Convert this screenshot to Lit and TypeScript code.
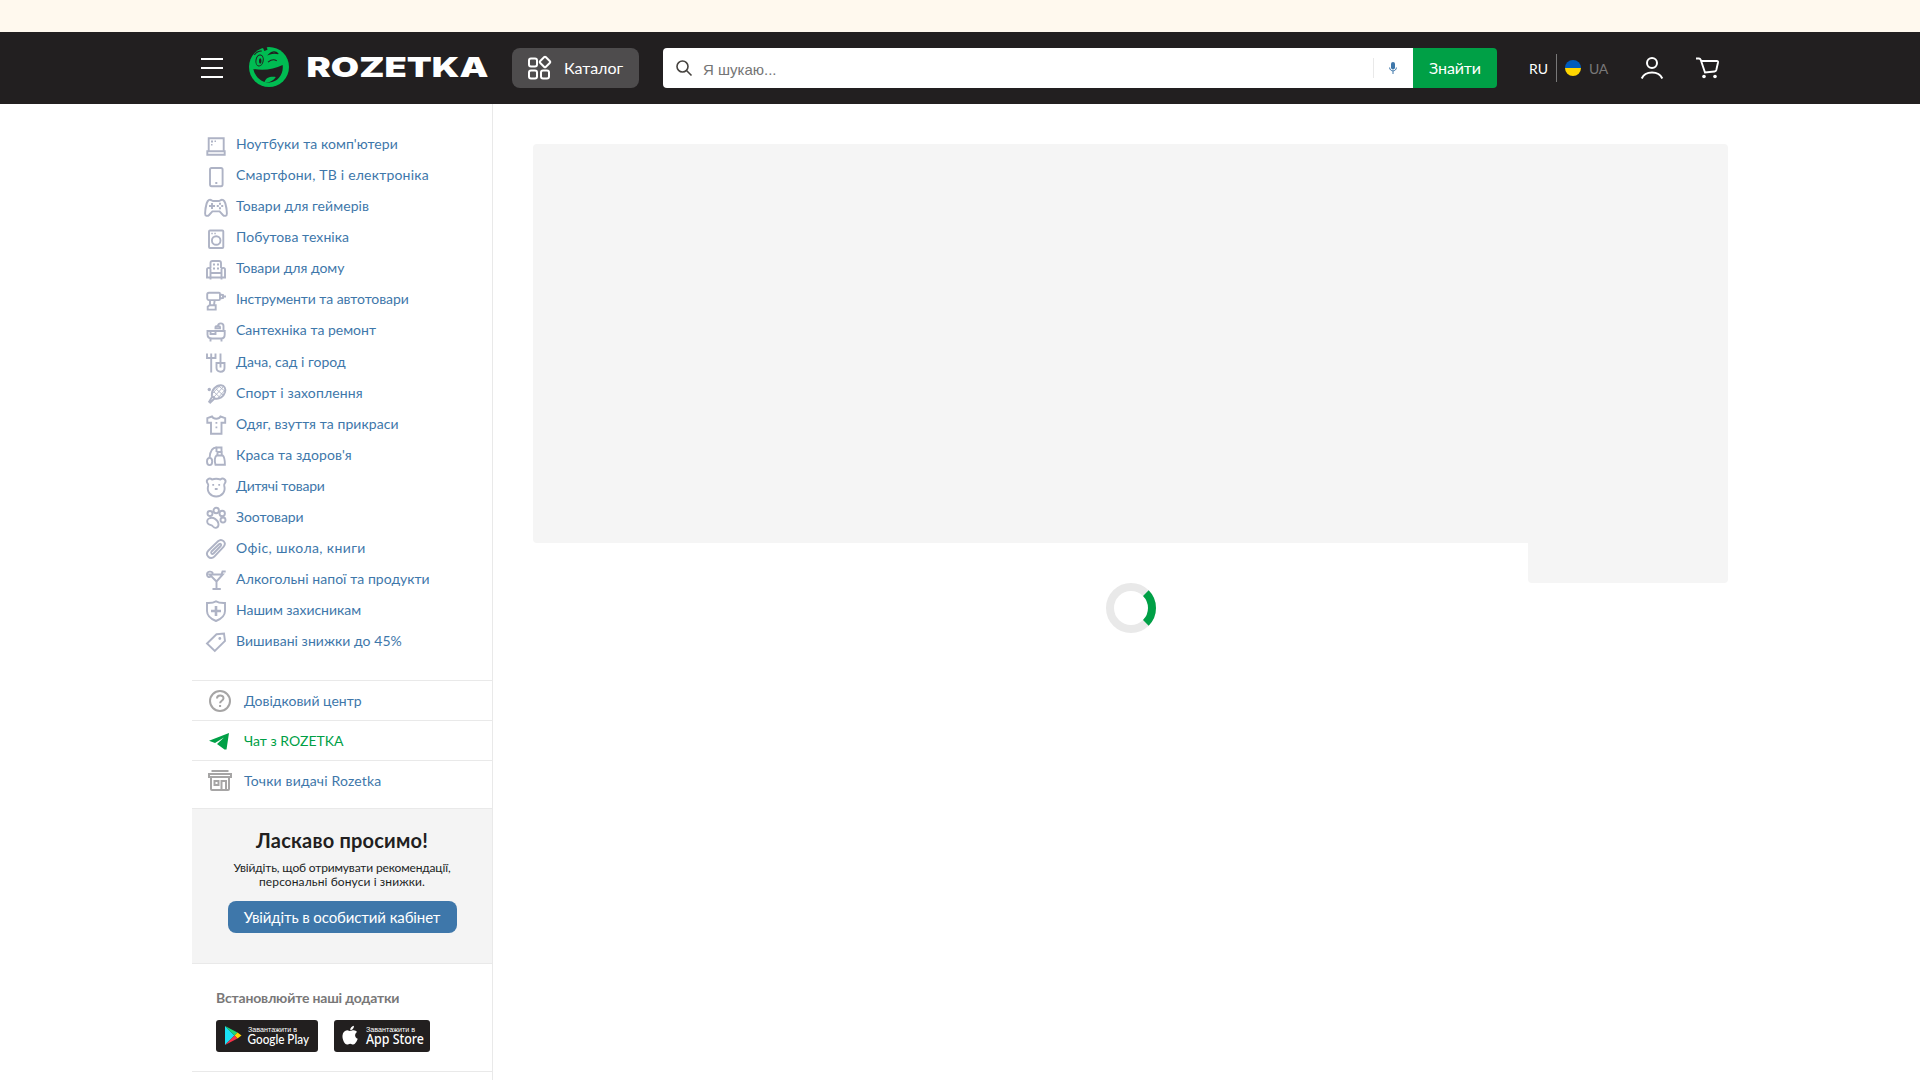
import { LitElement, html, css, svg } from "lit";
import { customElement } from "lit/decorators.js";
import { styleMap } from "lit/directives/style-map.js";

// t: label, ls: letter spacing in px, i: icon on a 24×24 grid
const MENU = [
  { t: "Ноутбуки та комп'ютери", ls: 0.07, i: svg`<path d="M4.700 17V4.300h15V17M3.300 17.300h17.400v3.500H3.300z"/><path class="dots" d="M7 6.500h2v2H7zM10.500 6.500h1.500v1.500h-1.500zM7 10h1.500v1.500H7z"/>` },
  { t: "Смартфони, ТВ і електроніка", ls: 0.2, i: svg`<rect x="6" y="3" width="12.600" height="18.200" rx="1.600"/><path class="dots" d="M11.300 17h2v2h-2z"/>` },
  { t: "Товари для геймерів", ls: 0.08, i: svg`<path d="M5 4c2-1 3 1 4 1h6c1 0 2-2 4-1 2.500 1 3.700 9 3.900 13.500.1 2.700-2.500 3-4 1.500l-3.300-3.600H8.400L5.100 19C3.600 20.500 1 20.200 1.100 17.500 1.300 13 2.500 5 5 4z"/><path d="M8 7v6M5 10h6"/><path class="dots" d="M15 6.800h2v2h-2zM15 11.200h2v2h-2zM12.800 9h2v2h-2zM17.200 9h2v2h-2z"/>` },
  { t: "Побутова техніка", ls: 0.08, i: svg`<rect x="5" y="3.500" width="14.300" height="17.500" rx="1"/><circle cx="12.200" cy="13.500" r="4.300"/><path class="dots" d="M7.300 5.700h1.500v1.500H7.300zM10.300 5.700h1.500v1.500h-1.500z"/>` },
  { t: "Товари для дому", ls: -0.03, i: svg`<path d="M6.500 10V5c0-1.300.7-2 2-2h6.500c1.300 0 2 .7 2 2v5M6.500 19.500h11M6.500 15h11M6.500 20V11.500c0-2.200-3.500-2.200-3.500 0v8h3.500v2M17.500 20v-8.500c0-2.200 3.500-2.200 3.500 0v8h-3.500v2"/><path class="dots" d="M9 5.500h2v2H9zM13 5.500h2v2h-2zM9 9.500h2v2H9zM13 9.500h2v2h-2z"/>` },
  { t: "Інструменти та автотовари", ls: -0.07, i: svg`<path d="M5 3.700h10c.8 0 1 .4 1 1.200v5c0 .8-.5 1.200-1.200 1.200H5c-1.200 0-1.800-1-1.800-2V5.500c0-1 .8-1.800 1.800-1.800zM16 5.500l3 .5v3l-3 .5M19 7.500h3M6 11.200v5M10.700 11.200 10 16.200M5.500 16.300h6.200v4.300H3.700v-2.800z"/>` },
  { t: "Сантехніка та ремонт", ls: 0.01, i: svg`<path d="M3.500 11h17.200v3.500c0 2.700-1.200 4-3.500 4h-9c-3 0-4.700-1-4.700-4zM6.500 18.500v3M17.500 18.500v3M6.500 11v3h5v-3M19.500 11V6c0-3.500-5.500-3.500-5.500 0M11.500 8.300V7c0-1.500 4.500-1.500 4.500 0v1.300z"/>` },
  { t: "Дача, сад і город", ls: 0.03, i: svg`<path d="M3 2.500V7h8.500V2.500M7.200 2.500v19M16.500 2.500v14M12.500 12H20.500v5c0 5-8 5-8 0z"/>` },
  { t: "Спорт і захоплення", ls: 0.14, i: svg`<path d="M7.800 13.800C7.300 8 12 3 17 3.200c3.500.2 5 3.300 4 7-1.300 4.400-5.600 7.200-10 6.300zM8 15l-3.300 5.500M11 16 5.500 21.300"/><path class="thin" d="m10 10 6 5.500M12 7l7 6M15 4.300l6 5M19.500 4.500 10 15M15.500 4 9 11M21 8l-7 8"/><circle class="dots" cx="5.300" cy="7.500" r="1.700"/>` },
  { t: "Одяг, взуття та прикраси", ls: 0.09, i: svg`<path d="M8 3.500 3.300 5.200v4.600H7v11h10.500v-11h3.700V5.200L16.500 3.500c-1.500 3-7 3-8.500 0z"/><path class="dots" d="M11.500 9h1.800v1.800h-1.800zM11.500 13.500h1.800v1.800h-1.800z"/>` },
  { t: "Краса та здоров'я", ls: 0.12, i: svg`<path d="M12.500 11.500h6.200c2.200 1.700 2.200 5.500 2.200 9.300H11.500c-1-4-1.200-7.300 1-9.300zM13.500 11.500V8h4.200v3.500M12.500 8V3.500h5V8"/><ellipse cx="5.600" cy="17.500" rx="2.600" ry="3.600"/><path d="M5.600 13.700C6 8 8 3.500 12.500 3.500"/>` },
  { t: "Дитячі товари", ls: -0.2, i: svg`<path d="M8 4.500c-2.800-2.500-6.500.5-4.600 3.600.4.700 1 1 .8 2.400C2.500 17 6.500 21.500 12.200 21.500s9.700-4.500 8-11c-.2-1.400.4-1.700.8-2.400C22.900 5 19.200 2 16.400 4.500c-3-1-5.400-1-8.400 0z"/><path class="dots" d="M8.300 9h1.800v1.800H8.300zM14.300 9h1.800v1.800h-1.800zM10.800 13h2.800v2h-2.800z"/>` },
  { t: "Зоотовари", ls: -0.05, i: svg`<circle cx="6" cy="7.500" r="2.500"/><circle cx="12.200" cy="4.500" r="2.700"/><circle cx="18.200" cy="7.500" r="2.700"/><circle cx="19" cy="14" r="2.500"/><path d="M5 12.500c4-2 9 1 9.500 5.500.2 4-3.500 5-5.500 2.500-1.500-2-4-1.300-5.300-3.300-1-1.700-.5-3.900 1.300-4.700z"/>` },
  { t: "Офіс, школа, книги", ls: 0.38, i: svg`<path d="M4.500 13.500 14 4.300c3.800-3.600 9.200 1.400 5.500 5.500l-9.200 9.800c-4 4.200-10-1.800-5.800-6.100zM7.500 14.500l7.500-7.300c1.500-1.200 3 .4 1.700 1.800L9.500 16.500c-1.500 1.300-3-.5-2-2z"/>` },
  { t: "Алкогольні напої та продукти", ls: 0.06, i: svg`<path d="M5.500 6.500h13.300L12.500 13.500zM12.500 13v8M8.500 21h8.300M17 8 18.500 3.500h3.200M6.500 9C4.500 9.500 3 8.300 3 6.500c0-3.200 4.500-4 6-1"/>` },
  { t: "Нашим захисникам", ls: -0.03, i: svg`<path d="M12 2.300c2.500 1.700 5.500 1.800 9 1.700v8c0 5-4 8-9 10-5-2-9-5-9-10V4c3.500.1 6.500 0 9-1.700z"/><path class="thick" d="M12 7v10M7 12h10"/>` },
  { t: "Вишивані знижки до 45%", ls: 0.04, i: svg`<path d="M12.500 4.200 20 3.500l1 7.500-10.200 10L3 13.500z"/><circle class="dots" cx="15.800" cy="8.500" r="1.400"/>` },
];

@customElement("app-root")
export class AppRoot extends LitElement {
  static styles = css`
    :host { display: block; height: 1080px; overflow: hidden; background: #fff; font-family: Lato, "Noto Sans", sans-serif; font-size: 14px; color: #221f1f; }
    * { box-sizing: border-box; }
    svg { display: block; flex: none; overflow: visible; }
    .banner { height: 32px; background: #fff9ee; }
    .header { height: 72px; background: #221f20; padding: 0 192px; display: flex; align-items: center; color: #fff; }
    .burger { margin-left: 9px; width: 22px; height: 22px; fill: none; stroke: #fff; stroke-width: 2; }
    .face { margin: 0 0 2px 26px; width: 40px; height: 40px; }
    .logo { margin: 0 0 2px 18px; width: 181px; height: 20px; fill: #fff; font: 900 27.5px Inter, sans-serif; }
    .catalog { margin-left: 24px; width: 127px; height: 40px; border-radius: 8px; background: #4e4c4d; display: flex; align-items: center; padding-left: 16px; gap: 13px; font-size: 16px; letter-spacing: -.06px; }
    .catalog span, .find span { padding-bottom: 2px; }
    .catalog svg { width: 23px; height: 24px; fill: none; stroke: #fff; stroke-width: 2; }
    .search { margin-left: 24px; width: 750px; height: 40px; background: #fff; border-radius: 4px 0 0 4px; display: flex; align-items: center; padding-left: 13px; }
    .lens { width: 16px; height: 16px; fill: none; stroke: #46433f; stroke-width: 1.600; }
    .placeholder { margin-left: 11px; padding-top: 2px; flex: 1; color: #757575; font: 15px "Liberation Sans", sans-serif; }
    .mic { width: 40px; height: 20px; border-left: 1px solid #e9e9e9; display: flex; justify-content: center; align-items: center; padding-right: 1px; }
    .find { width: 84px; height: 40px; border-radius: 0 4px 4px 0; background: #00a046; display: flex; align-items: center; justify-content: center; font-size: 16px; letter-spacing: -.1px; }
    .lang { margin-left: 32px; display: flex; align-items: center; }
    .ru { width: 27px; }
    .bar { width: 1px; height: 28px; background: #797878; }
    .flag { width: 16px; height: 16px; border-radius: 50%; background: linear-gradient(#005bbb 50%, #ffd600 50%); margin: 0 8px 0 8px; }
    .ua { color: #797878; width: 19px; letter-spacing: -.3px; }
    .user { margin-left: 33px; width: 22px; height: 22px; fill: none; stroke: #fff; stroke-width: 2; }
    .cart { margin-left: 33px; width: 23px; height: 22px; fill: none; stroke: #fff; stroke-width: 1.900; }
    .body { height: 976px; padding: 0 192px; display: flex; }
    .side { width: 301px; border-right: 1px solid #e9e9e9; flex: none; }
    .menu { padding-top: 24.200px; height: 576px; }
    .item { height: 31.060px; display: flex; align-items: center; padding-left: 12px; gap: 8px; color: #3e77aa; white-space: nowrap; }
    .item svg { width: 24px; height: 24px; fill: none; stroke: #aeb3c5; stroke-width: 1.900; margin-top: 4px; }
    .dots { fill: #aeb3c5; stroke: none; }
    .thin { stroke-width: .9; }
    .thick { stroke-width: 2.600; }
    .link { height: 40px; border-top: 1px solid #e9e9e9; display: flex; align-items: center; padding-left: 16px; gap: 12px; color: #3e77aa; white-space: nowrap; }
    .link svg { width: 24px; height: 24px; fill: none; stroke: #a6a5a5; stroke-width: 2; }
    .link.green { color: #00a046; }
    .last { height: 48px; padding-bottom: 8px; letter-spacing: .16px; }
    .last svg { margin-top: 1px; }
    .auth { height: 156px; background: #f4f4f4; border: solid #e9e9e9; border-width: 1px 0; display: flex; flex-direction: column; align-items: center; text-align: center; }
    .auth h2 { margin: 18px 0 0; font-size: 20px; line-height: 26px; letter-spacing: .2px; }
    .auth p { margin: 8px 0 0; font-size: 12px; line-height: 14px; }
    .tight { letter-spacing: -.15px; }
    .wide { letter-spacing: .1px; }
    .login { margin-top: 12px; width: 229px; height: 32px; border-radius: 8px; background: #3e77aa; color: #fff; font-size: 15px; letter-spacing: -.1px; display: flex; align-items: center; justify-content: center; }
    .apps { height: 108px; border-bottom: 1px solid #e9e9e9; padding: 23px 24px 0; }
    .apps h3 { margin: 0; font-size: 14px; line-height: 22px; color: #797878; letter-spacing: -.18px; }
    .badges { display: flex; gap: 16px; margin-top: 11px; }
    .badge { height: 32px; width: 102px; border-radius: 3px; background: #221f1f; fill: #fff; }
    .badge.apple { width: 96px; }
    .small { font: 7px "Liberation Sans", sans-serif; }
    .store { font: 500 13.500px "Noto Sans", sans-serif; }
    .play { font: 500 13.500px Lato, sans-serif; }
    .main { flex: 1; padding: 40px 0 0 40px; }
    .hero { display: flex; height: 440px; }
    .slide { flex: 1; height: 399px; background: #f5f5f5; border-radius: 4px 0 0 4px; }
    .aside { width: 200px; height: 439px; background: #f5f5f5; border-radius: 0 4px 4px 4px; }
    .spinner { width: 50px; height: 50px; margin: -1px auto 0; fill: none; stroke-width: 8; }
  `;

  render() {
    return html`
      <div class="banner"></div>
      <header class="header">
        <svg class="burger" viewBox="0 0 22 22"><path d="M0 2h22M0 11h22M0 20h22"/></svg>
        <svg class="face" viewBox="0 0 41 41">
          <circle cx="20.500" cy="20.500" r="20.500" fill="#00bc52"/>
          <path d="M13.500-.5 15.800 4 19 2.700 18-.5z" fill="#221f20"/>
          <path d="M4.500 22.500c10 2 21 .500 30-4 1.200 9.500-5 17.500-13.500 18-8.500.2-15-6-16.500-14z" fill="#221f20"/>
          <path d="M16 36c1-4.500 5.500-6 11.500-5.200-2.500 4-6.500 6-11.500 5.200z" fill="#00bc52"/>
          <ellipse cx="10.800" cy="13.800" rx="3.700" ry="5.700" transform="rotate(10 11 14)" fill="none" stroke="#221f20" stroke-width="1"/>
          <ellipse cx="11.500" cy="14.300" rx="1.300" ry="2.800" fill="#221f20"/>
          <path d="M5.500 8c2-2.500 4.500-4 7.500-3.800M20.500 7.500c3-3.500 7-3.500 9.500-.5-3-1.300-6-.8-9.500.5zM19.500 15.500c3-2.500 6-3.300 9-1.300" fill="none" stroke="#221f20" stroke-width="1.100"/>
        </svg>
        <svg class="logo" viewBox="0 0 181 20"><text x="-.5" y="20" textLength="182" lengthAdjust="spacingAndGlyphs">ROZETKA</text></svg>
        <div class="catalog">
          <svg viewBox="0 0 23 24"><rect x="1" y="2.500" width="8" height="8" rx="2"/><rect x="1" y="14.500" width="8" height="8" rx="2"/><rect x="13" y="14.500" width="8" height="8" rx="2"/><rect x="13" y="2" width="8" height="8" rx="1" transform="rotate(45 17 6)"/></svg>
          <span>Каталог</span>
        </div>
        <div class="search">
          <svg class="lens" viewBox="0 0 16 16"><circle cx="6.500" cy="6.500" r="5.500"/><path d="m10.500 10.500 5 5"/></svg>
          <span class="placeholder">Я шукаю...</span>
          <span class="mic"><svg width="8" height="12" viewBox="0 0 8 12"><rect x="2" width="4" height="7.500" rx="2" fill="#3e77aa"/><path d="M.6 5.500c0 4.500 6.800 4.500 6.800 0M4 9v3" fill="none" stroke="#3e77aa"/></svg></span>
        </div>
        <div class="find"><span>Знайти</span></div>
        <div class="lang"><span class="ru">RU</span><span class="bar"></span><span class="flag"></span><span class="ua">UA</span></div>
        <svg class="user" viewBox="0 0 22 22"><circle cx="11" cy="6" r="5"/><path d="M.7 21.500c3.500-8 17.100-8 20.600 0"/></svg>
        <svg class="cart" viewBox="0 0 23 22"><path d="M0 1.500h3c1 0 1.300.3 1.700 1.300L9 15.500l9.500-1c1-.1 1.500-.5 1.800-1.500L22 5.500c.2-1-.2-1.500-1.200-1.500H5.500"/><circle cx="8" cy="19.500" r="1.800" fill="#fff" stroke="none"/><circle cx="19" cy="19.500" r="1.800" fill="#fff" stroke="none"/></svg>
      </header>
      <div class="body">
        <aside class="side">
          <nav class="menu">${MENU.map((m) => html`<div class="item"><svg viewBox="0 0 24 24">${m.i}</svg><span style=${styleMap({ letterSpacing: `${m.ls}px` })}>${m.t}</span></div>`)}</nav>
          <div class="link"><svg viewBox="0 0 24 24"><circle cx="12" cy="12" r="10"/><path d="M9 9.500c0-4 6.500-4 6.500-.3 0 2.500-3.400 2.600-3.400 5M12.100 16v2"/></svg><span>Довідковий центр</span></div>
          <div class="link green"><svg viewBox="0 0 24 24"><path d="M1 11.800 21 4 18.500 20.500h-2l-7.500-5.500 7-6.500-9 5.500z" fill="#00a046" stroke="none"/></svg><span>Чат з ROZETKA</span></div>
          <div class="link last"><svg viewBox="0 0 24 24"><path d="M3.500 2h17M1 5h22v3H1zM3 8v12c0 .7.3 1 1 1h16c.7 0 1-.3 1-1V8M6.500 12h4v4h-4zM13.500 21v-9h4.500v9"/></svg><span>Точки видачі Rozetka</span></div>
          <section class="auth">
            <h2>Ласкаво просимо!</h2>
            <p><span class="tight">Увійдіть, щоб отримувати рекомендації,</span><br><span class="wide">персональні бонуси і знижки.</span></p>
            <div class="login">Увійдіть в особистий кабінет</div>
          </section>
          <section class="apps">
            <h3>Встановлюйте наші додатки</h3>
            <div class="badges">
              <svg class="badge" viewBox="0 0 102 32">
                <path d="M9 6v19l9.500-9.500z" fill="#19e0f5"/><path d="M9 6l12.500 6.500-3 3z" fill="#1fd676"/><path d="m21.500 12.500 4 3-4 3-3-3z" fill="#ffd500"/><path d="m9 25 12.500-6.500-3-3z" fill="#f43249"/>
                <text class="small" x="32" y="12" textLength="49" lengthAdjust="spacingAndGlyphs">Завантажити в</text>
                <text class="play" x="31.500" y="24" textLength="61.500" lengthAdjust="spacingAndGlyphs">Google Play</text>
              </svg>
              <svg class="badge apple" viewBox="0 0 96 32">
                <path d="M16.500 11c1-.2 2-.9 3.300-.8 1.300.1 2.500.7 3.200 1.700-2.800 1.800-2.400 5.600.7 6.900-.9 2.700-2.600 5.700-4.400 5.700-1.300 0-1.700-.8-3.100-.8s-1.900.8-3.100.8c-2.400 0-5-5.200-4.600-9 .3-3.400 2.400-5.200 4.700-5.300 1.300 0 2.300.8 3.300.8zM16.200 10.200c-.2-2.300 1.700-4.300 3.700-4.500.2 2.300-1.500 4.500-3.700 4.500z"/>
                <text class="small" x="32" y="12" textLength="49" lengthAdjust="spacingAndGlyphs">Завантажити в</text>
                <text class="store" x="32" y="24" textLength="58" lengthAdjust="spacingAndGlyphs">App Store</text>
              </svg>
            </div>
          </section>
        </aside>
        <main class="main">
          <div class="hero"><div class="slide"></div><div class="aside"></div></div>
          <svg class="spinner" viewBox="0 0 50 50"><circle cx="25" cy="25" r="21" stroke="#e9e9e9"/><path d="M39.850 10.150a21 21 0 0 1 0 29.700" stroke="#00a046"/></svg>
        </main>
      </div>`;
  }
}
